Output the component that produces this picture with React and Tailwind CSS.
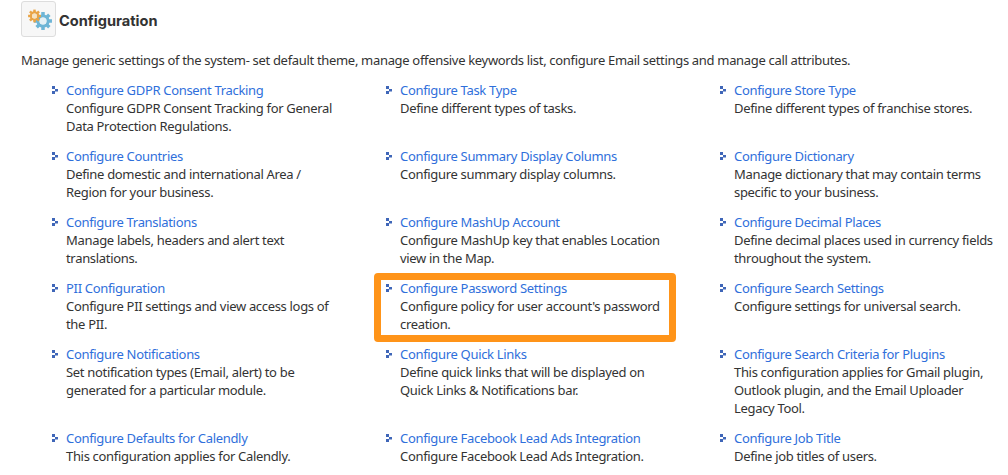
const items = [
  ["Configure GDPR Consent Tracking", "Configure GDPR Consent Tracking for General Data Protection Regulations."],
  ["Configure Task Type", "Define different types of tasks."],
  ["Configure Store Type", "Define different types of franchise stores."],
  ["Configure Countries", "Define domestic and international Area / Region for your business."],
  ["Configure Summary Display Columns", "Configure summary display columns."],
  ["Configure Dictionary", "Manage dictionary that may contain terms specific to your business."],
  ["Configure Translations", "Manage labels, headers and alert text translations."],
  ["Configure MashUp Account", "Configure MashUp key that enables Location view in the Map."],
  ["Configure Decimal Places", "Define decimal places used in currency fields throughout the system."],
  ["PII Configuration", "Configure PII settings and view access logs of the PII."],
  ["Configure Password Settings", "Configure policy for user account's password creation.", true],
  ["Configure Search Settings", "Configure settings for universal search."],
  ["Configure Notifications", "Set notification types (Email, alert) to be generated for a particular module."],
  ["Configure Quick Links", "Define quick links that will be displayed on Quick Links & Notifications bar."],
  ["Configure Search Criteria for Plugins", "This configuration applies for Gmail plugin, Outlook plugin, and the Email Uploader Legacy Tool."],
  ["Configure Defaults for Calendly", "This configuration applies for Calendly."],
  ["Configure Facebook Lead Ads Integration", "Configure Facebook Lead Ads Integration."],
  ["Configure Job Title", "Define job titles of users."],
];

function Bullet() {
  return (
    <svg width="7" height="8" viewBox="0 0 7 8" className="mt-[5px] mr-[7px] shrink-0" fill="#3f66b8">
      <rect x="0" y="0" width="3" height="3" />
      <rect x="3" y="3" width="3" height="2.5" />
      <rect x="0" y="5" width="3" height="3" />
    </svg>
  );
}

function Gear({ cx, cy, r, color, inner }) {
  const teeth = [0, 45, 90, 135, 180, 225, 270, 315];
  return (
    <g>
      {teeth.map((a) => (
        <rect
          key={a}
          x={cx - r * 0.25}
          y={cy - r * 1.28}
          width={r * 0.5}
          height={r * 0.6}
          fill={color}
          transform={`rotate(${a} ${cx} ${cy})`}
        />
      ))}
      <circle cx={cx} cy={cy} r={r * 0.72} fill="none" stroke={color} strokeWidth={r * 0.44} />
      <circle cx={cx} cy={cy} r={r * 0.5} fill={inner} />
    </g>
  );
}

export default function App() {
  return (
    <div className="h-[475px] w-[1008px] overflow-hidden bg-white text-[13px] leading-[18px] tracking-[-0.32px] text-[#333] font-['Noto_Sans',sans-serif]">
      {/* Header */}
      <div className="flex items-center pl-[21px] pt-[1px]">
        <div className="flex h-[36px] w-[35px] items-center justify-center rounded-[3px] border border-[#dddddd] bg-[#f7f7f7]">
          <svg width="26" height="24" viewBox="0 0 26 24">
            <Gear cx={17} cy={14} r={7} color="#6db5d6" inner="#e4f1f6" />
            <Gear cx={8.5} cy={9} r={5} color="#e9a445" inner="#f7e3c0" />
          </svg>
        </div>
        <h1 className="ml-[3px] mt-[4px] text-[14.6px] tracking-normal font-bold text-[#333] font-['Inter',sans-serif]">Configuration</h1>
      </div>

      <p className="mt-[14px] pl-[21px]">
        Manage generic settings of the system- set default theme, manage offensive keywords list, configure Email settings and manage call attributes.
      </p>

      {/* Links */}
      <div className="mt-[12px] grid grid-cols-[334px_334px_334px] gap-y-[12px] pl-[52px]">
        {items.map(([title, desc, marked]) => (
          <div key={title} className="relative flex pr-[4px]">
            <Bullet />
            <div className="w-[268px]">
              <a href="#" className="block text-[#2f6fdb]">{title}</a>
              <div>{desc}</div>
            </div>
            {marked && (
              <div className="absolute -left-[12px] -top-[6px] h-[69px] w-[302px] rounded-[4px] border-[7px] border-[#ff9419]" />
            )}
          </div>
        ))}
      </div>
    </div>
  );
}
